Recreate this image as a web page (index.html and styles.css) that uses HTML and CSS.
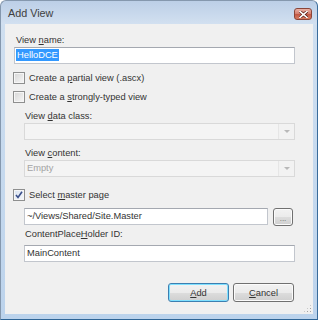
FILE: index.html
```html
<!DOCTYPE html>
<html lang="en">
<head>
  <meta charset="UTF-8">
  <meta name="viewport" content="width=device-width, initial-scale=1.0">
  <title>Add View</title>
  <link rel="stylesheet" href="styles.css">
</head>
<body>
  <div class="window">
    <div class="titlebar">
      <span class="title">Add View</span>
      <button class="close-btn" type="button" aria-label="Close">
        <svg width="9" height="7" viewBox="0 0 9 7">
          <path d="M1 0.5 L8 6.5 M8 0.5 L1 6.5" stroke="#5a1f18" stroke-width="3" stroke-linecap="square"/>
          <path d="M1 0.5 L8 6.5 M8 0.5 L1 6.5" stroke="#ffffff" stroke-width="1.6" stroke-linecap="square"/>
        </svg>
      </button>
    </div>

    <div class="client">
      <div class="form">
        <div class="field-label first">View <u>n</u>ame:</div>
        <div class="textbox"><span class="selected">HelloDCE</span></div>

        <div class="check first-check">
          <span class="box"></span>
          <span>Create a <u>p</u>artial view (.ascx)</span>
        </div>
        <div class="check">
          <span class="box"></span>
          <span>Create a <u>s</u>trongly-typed view</span>
        </div>

        <div class="indent">
          <div class="field-label">View <u>d</u>ata class:</div>
          <div class="combo">
            <span class="combo-text"></span>
            <span class="combo-btn"><span class="arrow"></span></span>
          </div>
          <div class="field-label">View <u>c</u>ontent:</div>
          <div class="combo">
            <span class="combo-text">Empty</span>
            <span class="combo-btn"><span class="arrow"></span></span>
          </div>
        </div>

        <div class="check master-check">
          <span class="box checked">
            <svg width="8" height="8" viewBox="0 0 8 8">
              <path d="M1 4 L3 6.5 L7 0.8" fill="none" stroke="#3b4f8a" stroke-width="1.6"/>
            </svg>
          </span>
          <span>Select <u>m</u>aster page</span>
        </div>

        <div class="indent">
          <div class="master-row">
            <div class="textbox">~/Views/Shared/Site.Master</div>
            <button class="btn browse" type="button">...</button>
          </div>
          <div class="field-label cph">ContentPlace<u>H</u>older ID:</div>
          <div class="textbox">MainContent</div>
        </div>

        <div class="actions">
          <button class="btn default" type="button"><u>A</u>dd</button>
          <button class="btn" type="button"><u>C</u>ancel</button>
        </div>
      </div>
      <div class="grip"></div>
    </div>
  </div>
</body>
</html>
```

FILE: styles.css
```css
body {
  margin: 0;
  font-family: "Liberation Sans", Arial, sans-serif;
  font-size: 9.3px;
  color: #333;
}
u {
  text-decoration: underline;
  text-underline-offset: 1px;
}
.window {
  width: 318px;
  height: 320px;
  box-sizing: border-box;
  display: flex;
  flex-direction: column;
  padding: 0 4px 5px 4px;
  border: 1px solid #8598ae;
  border-right-color: #3a6c9b;
  border-bottom-color: #2f6596;
  border-radius: 6px 6px 0 0;
  background: linear-gradient(#bccfe7, #d2e0f0 23px, #cfdff0 24px, #bcd3ec);
}
.titlebar {
  height: 23px;
  display: flex;
  justify-content: space-between;
}
.title {
  margin: 6px 0 0 3px;
  font-size: 10.8px;
  color: #404040;
}
.close-btn {
  width: 18px;
  height: 12px;
  margin: 7px 1px 0 0;
  padding: 0;
  display: flex;
  align-items: center;
  justify-content: center;
  border: 1px solid #8a4538;
  border-radius: 3px;
  background: linear-gradient(#eab2a6, #d37b6b 50%, #c25743 51%, #d77a60);
}
.client {
  flex: 1;
  position: relative;
  background-color: #f0f0f0;
}
.form {
  width: 281px;
  margin-left: 9px;
  display: flex;
  flex-direction: column;
}
.field-label {
  height: 12px;
  line-height: 12px;
  margin-top: 7px;
  padding-left: 1px;
}
.field-label.first {
  margin-top: 10px;
  padding-left: 2px;
}
.textbox {
  height: 17px;
  box-sizing: border-box;
  margin-top: 1px;
  padding: 0 2px;
  line-height: 15px;
  white-space: nowrap;
  background-color: #fff;
  border: 1px solid #c2c6cd;
  border-top-color: #a4a8b0;
}
.selected {
  display: inline-block;
  line-height: 12px;
  padding: 0 1px;
  margin-left: -1px;
  color: #fff;
  background-color: #3399ff;
}
.check {
  height: 13px;
  margin-left: -1px;
  display: flex;
  align-items: center;
  gap: 4px;
  margin-top: 6px;
}
.check.first-check {
  margin-top: 7px;
}
.check.master-check {
  margin-top: 11px;
}
.box {
  width: 12px;
  height: 12px;
  box-sizing: border-box;
  display: flex;
  align-items: center;
  justify-content: center;
  border: 1px solid #8e8f8f;
  box-shadow: inset 0 0 0 1px #f6f6f6;
  background: linear-gradient(135deg, #d6d6d6, #f7f7f7);
}
.box.checked {
  background: linear-gradient(135deg, #d9e3f1, #f6f8fb);
}
.indent {
  margin-left: 10px;
  display: flex;
  flex-direction: column;
}
.combo {
  height: 17px;
  box-sizing: border-box;
  margin-top: 1px;
  display: flex;
  border: 1px solid #d9d9d9;
  background-color: #f4f4f4;
}
.combo-text {
  flex: 1;
  padding-left: 2px;
  line-height: 15px;
  color: #a3a3a3;
}
.combo-btn {
  width: 15px;
  display: flex;
  align-items: center;
  justify-content: center;
  border-left: 1px solid #e6e6e6;
  background-color: #f2f2f2;
}
.arrow {
  width: 0;
  height: 0;
  border-left: 3px solid transparent;
  border-right: 3px solid transparent;
  border-top: 3px solid #b8b8b8;
}
.master-row {
  height: 18px;
  margin-top: 7px;
  display: flex;
  gap: 5px;
}
.master-row .textbox {
  flex: 1;
  margin-top: 0;
}
.field-label.cph {
  margin-top: 2px;
}
.indent .field-label.cph + .textbox {
  margin-top: 5px;
}
.btn {
  height: 19px;
  width: 61px;
  padding: 0;
  box-sizing: border-box;
  font-family: inherit;
  font-size: inherit;
  color: #333;
  border: 1px solid #707070;
  border-radius: 3px;
  box-shadow: inset 0 0 0 1px #fbfbfb;
  background: linear-gradient(#f2f2f2, #ebebeb 50%, #dddddd 51%, #cfcfcf);
}
.btn.default {
  border-color: #3c7fb1;
  box-shadow: inset 0 0 0 1px #7fe0ff;
}
.btn.browse {
  width: 20px;
  height: 18px;
  margin-right: 2px;
  padding-top: 3px;
  font-size: 8px;
  color: #666;
}
.actions {
  margin-top: 21px;
  padding-right: 1px;
  display: flex;
  justify-content: flex-end;
  gap: 4px;
}
.grip {
  position: absolute;
  right: 1px;
  bottom: 1px;
  width: 9px;
  height: 9px;
  background-image: radial-gradient(circle, #a0a0a0 0.8px, transparent 1px);
  background-size: 3px 3px;
  clip-path: polygon(100% 0, 100% 100%, 0 100%);
}
```
